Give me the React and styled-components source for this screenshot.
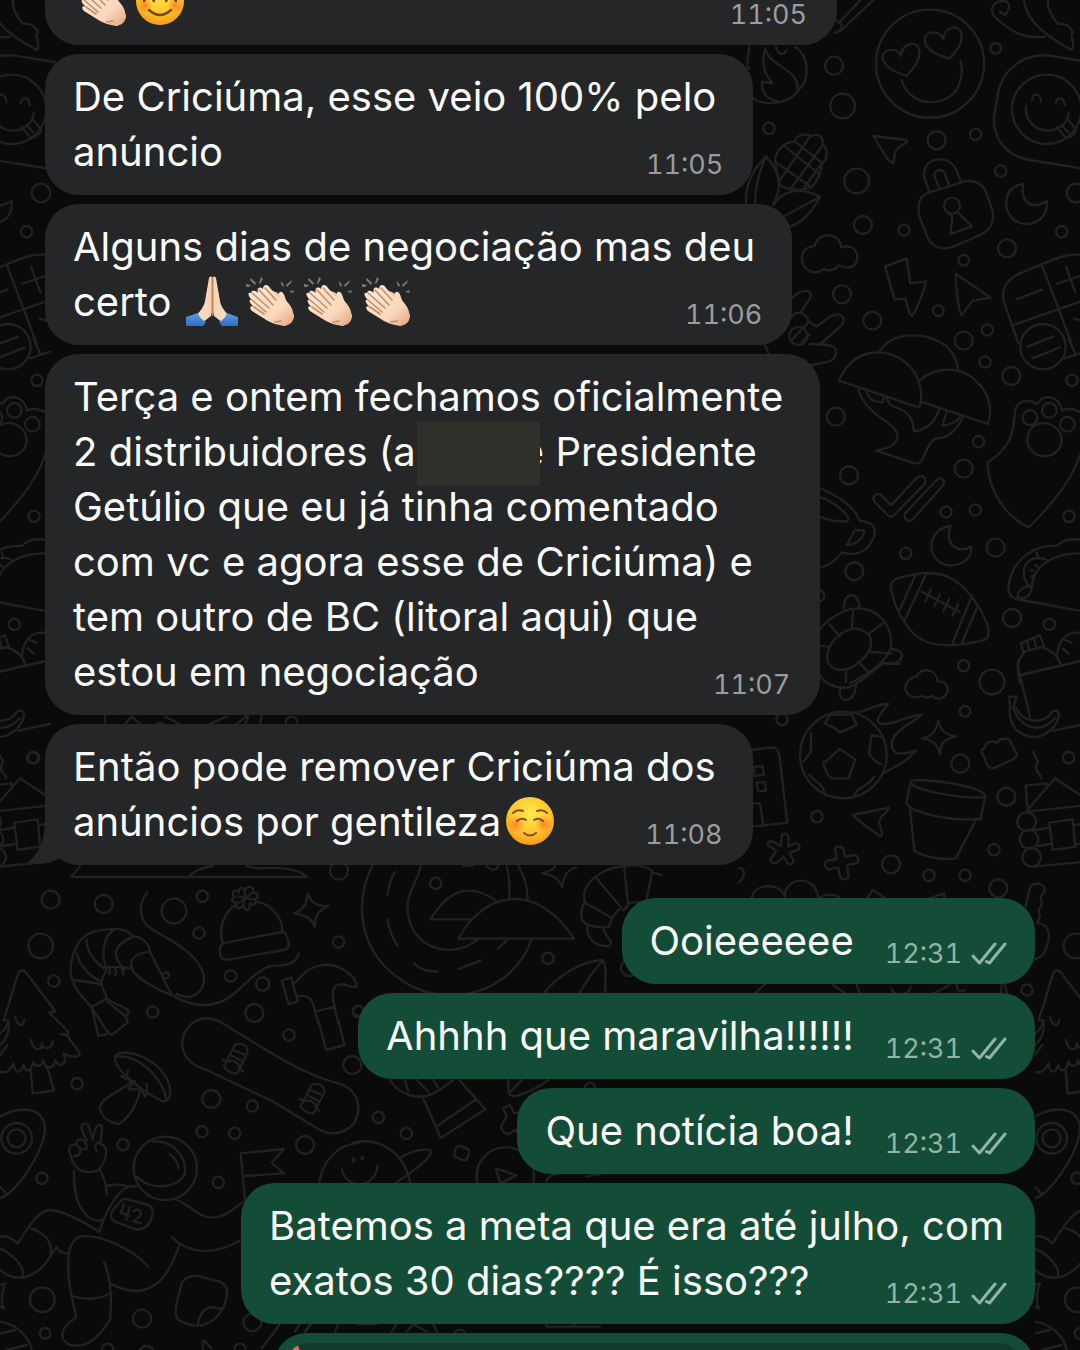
import React from "react";
import styled, { createGlobalStyle } from "styled-components";

const App = () => {
    return (
        <>
            <GlobalStyle />
            <Screen>
                <Wallpaper />
                <Thread>
                    {messages.map((message) => (
                        <Message key={message.id} {...message} />
                    ))}
                </Thread>
            </Screen>
        </>
    );
};

export default App;

const Message = ({ own, wide, single, tail, groupStart, quote, lines, time }) => (
    <Bubble $own={own} $wide={wide} $groupStart={groupStart}>
        {tail && <Tail />}
        {quote ? (
            <Quote>
                <QuoteMark viewBox="0 0 16 40" aria-hidden="true">
                    <path d="M0 9 L6 0 L9 8 L12 30 L0 40 Z" fill="#e8696b" />
                </QuoteMark>
            </Quote>
        ) : (
            <Body $single={single} $own={own}>
                <Text>
                    {lines.map((line, index) => (
                        <Line key={index}>{line}</Line>
                    ))}
                </Text>
                <Meta $own={own}>
                    <time>{time}</time>
                    {own && <Ticks />}
                </Meta>
            </Body>
        )}
    </Bubble>
);

const Ticks = () => (
    <TicksIcon viewBox="0 0 36 24" role="img" aria-label="Entregue">
        <path d="M2 14 L8.5 21 L24 2 M15.500 19.500 L18.500 21 L34 2" />
    </TicksIcon>
);

const Tail = () => (
    <TailShape viewBox="0 0 40 50" aria-hidden="true">
        <path d="M17 0 C17 22 14 36 0 47 C10 51 24 48 32 43 L40 46 L40 0 Z" />
    </TailShape>
);

// Emoji

const Clap = () => (
    <Emoji viewBox="0 0 58 50" role="img" aria-label="palmas">
        <defs>
            <linearGradient id="clapSkin" x1="0" y1="0" x2="1" y2="1">
                <stop offset="0" stopColor="#fdeada" />
                <stop offset="0.65" stopColor="#fad8bb" />
                <stop offset="1" stopColor="#e3a27c" />
            </linearGradient>
        </defs>
        <g fill="#77787a">
            <path d="M10 2 L15 7 L14 9 L9 4 Z M5 8 L10 9 L8 11 L5 11 Z M20 1 L22 3 L19 8 L18 7 Z" />
            <path d="M40 5 L43 9 L42 11 L40 8 Z M51 4 L50 7 L46 11 L45 9 Z M52 14 L53 17 L48 16 Z" />
        </g>
        <path
            d="M38 18 C40 15 42 16 43 20 C44 26 51 29 52 36 L53 41 L44 50 L34 45 L18 24 C22 12 35 14 38 18 Z"
            fill="#f0c4a0"
        />
        <path
            d="M10 17 C11 13 15 15 17 17 C15 12 19 10 22 13 C22 8 27 8 29 12 L39 23 C36 17 39 14 42 17 C44 19 44 24 47 27 C50 30 51 33 51 37 L53 39 C53 46 49 49 43 50 C36 49 31 47 27 45 L11 35 C8 32 9 29 13 31 C7 26 8 23 11 24 C6 19 7 16 10 17 Z"
            fill="url(#clapSkin)"
        />
        <path
            d="M11 17 L28 32 M11 24 L25 36 M13 31 L23 38 M18 14 L32 29 M24 12 L35 24 M34 46 L40 45"
            fill="none"
            stroke="#c58d68"
            strokeWidth="1.6"
            strokeLinecap="round"
        />
    </Emoji>
);

const Pray = () => (
    <Emoji viewBox="0 0 58 50" role="img" aria-label="mãos juntas">
        <defs>
            <linearGradient id="praySkin" x1="0" y1="0" x2="1" y2="0">
                <stop offset="0" stopColor="#fbe0c8" />
                <stop offset="0.45" stopColor="#f7d3b4" />
                <stop offset="0.5" stopColor="#b98668" />
                <stop offset="0.55" stopColor="#f7d3b4" />
                <stop offset="1" stopColor="#fbe0c8" />
            </linearGradient>
            <linearGradient id="praySleeve" x1="0" y1="0" x2="0" y2="1">
                <stop offset="0" stopColor="#5a9ee6" />
                <stop offset="1" stopColor="#2f6fc0" />
            </linearGradient>
        </defs>
        <path
            d="M26 2 C27 0 29 0 29.5 2 C30 0 32 0 33 2 L37 25 C38 31 42 35 46 40 L40 47 L31 40 L29.5 34 L28 40 L19 47 L13 40 C17 35 21 31 22 25 Z"
            fill="url(#praySkin)"
        />
        <path d="M29.5 4 L29.5 40" stroke="#b98668" strokeWidth="1.3" />
        <path
            d="M3 41 L15 37 C16 41 19 44 23 46 L20 50 L3 50 Z M55 41 L44 37 C43 41 40 44 36 46 L39 50 L55 50 Z"
            fill="url(#praySleeve)"
        />
    </Emoji>
);

const FaceGradients = () => (
    <defs>
        <radialGradient id="face" cx="0.5" cy="0.35" r="0.65">
            <stop offset="0" stopColor="#ffe94f" />
            <stop offset="0.6" stopColor="#fdc82d" />
            <stop offset="1" stopColor="#f39a1b" />
        </radialGradient>
        <radialGradient id="cheek">
            <stop offset="0" stopColor="#fb6a2a" stopOpacity="0.75" />
            <stop offset="1" stopColor="#fb7a2a" stopOpacity="0" />
        </radialGradient>
    </defs>
);

const Smile = () => (
    <Emoji viewBox="0 0 58 50" role="img" aria-label="rosto sorridente">
        <FaceGradients />
        <circle cx="29" cy="25" r="24" fill="url(#face)" />
        <circle cx="14" cy="29" r="8" fill="url(#cheek)" />
        <circle cx="44" cy="29" r="8" fill="url(#cheek)" />
        <path
            d="M13 25 Q18 17 23 25 M35 25 Q40 17 45 25 M18 34 Q29 44 40 34"
            fill="none"
            stroke="#7a4312"
            strokeWidth="2.4"
            strokeLinecap="round"
        />
    </Emoji>
);

const Relieved = () => (
    <Emoji viewBox="0 0 58 50" role="img" aria-label="rosto contente">
        <FaceGradients />
        <circle cx="29" cy="25" r="24" fill="url(#face)" />
        <circle cx="15" cy="28" r="9" fill="url(#cheek)" />
        <circle cx="43" cy="28" r="9" fill="url(#cheek)" />
        <path
            d="M12 17 Q16 13 22 15 M36 15 Q42 13 46 17 M16 25 Q20 21 25 24 M33 24 Q38 21 42 25 M23 37 Q29 42 35 37"
            fill="none"
            stroke="#8a4c12"
            strokeWidth="2"
            strokeLinecap="round"
        />
    </Emoji>
);

// Wallpaper doodles. Each sheet is drawn at three times its size.

const sheets = [
    {
        x: 740,
        y: 0,
        dots: [
            [282, 197, 27], [308, 318, 37], [87, 385, 17], [767, 145, 16], [707, 403, 17], [590, 421, 27],
            [350, 543, 37], [369, 675, 27], [492, 690, 17], [782, 513, 17], [1008, 579, 28], [965, 695, 17],
            [801, 745, 27], [671, 781, 16], [306, 883, 27], [397, 962, 27], [595, 932, 16], [742, 990, 17],
            [671, 1022, 27], [570, 191, 162], [920, 328, 104], [909, 1040, 68], [636, 617, 24],
        ],
        paths: [
            "M500 228 C460 215 425 195 428 168 C432 145 475 142 482 168 C488 128 530 120 538 150 C542 180 520 205 500 228 Z",
            "M628 176 C590 165 553 148 554 118 C558 90 600 90 610 118 C612 80 655 70 664 100 C670 130 648 155 628 176 Z",
            "M485 240 C510 330 640 325 660 245 C667 225 666 200 661 183",
            "M400 408 L500 420 C510 427 468 442 466 455 L460 490 L445 480 Z",
            "M568 578 L552 530 C545 465 640 460 652 520 L664 547 M598 566 L583 527 C580 505 612 505 616 525 L628 557",
            "M568 577 L665 547 C700 535 730 550 740 580 L757 630 C765 665 750 692 720 705 L640 740 C600 752 570 738 560 705 L540 655 C528 615 540 585 568 577 Z",
            "M625 640 L637 648 L632 702 L696 679 L656 640",
            "M850 552 C775 560 785 670 858 672 C900 672 925 640 920 603 C870 635 840 600 850 552 Z",
            "M224 738 C235 690 305 700 303 743 C340 725 370 770 340 798 C325 807 310 803 296 795 C285 812 265 815 252 807 C220 832 180 805 187 765 C190 748 208 738 224 738 Z",
            "M435 800 L500 775 L511 850 L558 844 C555 865 525 945 515 947 C505 945 502 915 496 896 L464 899 Z",
            "M648 822 L752 893 L698 902 L665 945 C655 940 645 830 648 822 Z",
            "M1060 188 L930 167 C860 158 790 200 774 280 L763 345 C755 420 805 470 870 480 L1060 511",
            "M858 318 C850 405 975 420 987 337 M876 300 C880 277 900 277 904 305 M947 310 C953 288 972 290 974 316",
            "M951 382 L975 411 C985 420 1015 400 1005 385 L982 356 M965 375 L985 397",
            "M1035 765 C990 758 960 770 900 795 L840 820 C800 838 785 865 790 900 L835 1030 M905 793 L995 1030 M820 975 L1035 900 M830 898 L906 869 M978 800 L1006 876 M952 851 L1030 825 M885 1030 L940 1010 M1003 955 L1040 968",
            "M775 60 C735 30 765 -5 800 5 M775 60 C820 100 860 118 915 110 M850 -10 C855 40 880 90 995 150 C1010 140 985 100 1000 98 C990 75 970 70 955 72 C935 50 918 20 925 -10 M800 5 C815 20 805 30 795 45 L780 35",
            "M28 140 C25 170 15 210 30 205 M35 290 C60 320 150 315 175 270 C210 240 210 170 165 140 M75 145 C60 210 85 235 97 250 L65 245 C65 275 80 300 110 302 M75 145 C85 200 180 205 172 270 M108 140 C115 165 130 170 140 150",
            "M105 485 C105 450 135 425 165 425 C170 400 205 400 210 410 C240 395 250 415 248 435 C265 445 265 480 245 490 C245 520 230 545 215 562 C190 570 150 575 120 555 Z M105 485 L215 562 M135 440 L235 520 M165 425 L248 490 M120 540 L210 410 M150 570 L248 435 M188 570 L245 490",
            "M18 615 C15 560 35 510 78 470 C125 520 125 570 100 610 M45 610 C45 560 55 520 78 470 M100 615 C130 570 180 560 240 590 C215 640 180 670 150 680 M240 590 L130 650",
            "M295 70 L370 -10 M300 95 L400 0 M285 62 C310 65 312 90 285 98",
            "M155 895 C185 865 220 865 210 895 L180 940 M150 955 C170 925 200 940 205 963 L230 980 L270 950 C310 930 320 960 305 975 L250 1025 M155 1020 L208 965 M185 1025 L210 1003",
        ],
    },
    {
        x: 740,
        y: 340,
        dots: [
            [735, 66, 17], [814, 108, 27], [996, 121, 17], [287, 230, 27], [716, 305, 17], [671, 386, 27],
            [327, 406, 27], [618, 516, 17], [706, 510, 17], [987, 529, 17], [497, 640, 17], [767, 623, 27],
            [343, 694, 27], [236, 767, 17], [816, 834, 27], [928, 853, 17], [671, 977, 17], [870, 233, 22],
            [928, 211, 22], [982, 253, 22], [175, -12, 27],
        ],
        paths: [
            "M297 122 C340 20 440 20 500 70 C545 110 550 170 538 203 Z",
            "M540 120 C590 75 670 80 710 125 C755 165 755 220 744 252 L543 185",
            "M418 36 C450 -25 560 -30 620 20 C645 45 655 70 653 92",
            "M355 148 C375 230 480 250 472 290 C468 320 440 325 408 332 L525 370 C560 375 550 310 590 295 C630 295 655 260 668 232 M440 175 C450 220 515 185 522 274 C560 270 585 245 598 207 M380 155 C390 185 405 185 428 187 L432 170 M620 215 L607 256 C635 255 650 245 660 232",
            "M400 475 C405 460 418 460 425 467 L453 496 L532 412 C545 402 562 415 555 430 L463 525 C455 532 448 530 443 525 L403 485 Z M495 520 L590 420 C602 408 617 420 610 435 L518 538 C505 548 490 538 495 520 Z",
            "M825 215 C830 180 865 175 892 192 C910 160 955 165 967 212 C985 200 1005 205 1035 225 M825 215 C820 280 815 320 742 368 C745 450 795 530 866 562 C920 510 1000 420 1025 330 M862 300 C862 230 960 235 965 300 C962 365 865 365 862 300 Z",
            "M632 558 C555 565 555 672 632 676 C675 675 700 645 692 620 C655 645 610 610 632 558 Z",
            "M452 740 C452 715 480 712 525 703 C620 685 670 730 713 795 C740 840 765 895 725 902 C650 920 570 925 525 885 C480 840 460 790 452 740 Z M525 708 L480 808 M558 703 L492 845 M693 775 L637 910 M713 798 L665 910 M545 755 L657 815 M573 748 L556 784 M600 763 L583 799 M628 778 L610 814 M655 792 L637 828",
            "M238 444 C300 470 345 500 358 542 C395 545 410 560 402 590 C385 635 350 650 305 637 C285 665 260 680 238 682 M238 470 C280 485 340 530 322 543 C300 548 260 540 238 530 M345 570 L373 572 C370 595 350 615 320 615 Z",
            "M238 870 C260 840 310 805 350 805 C430 805 465 880 450 930 C430 980 350 1020 330 1030 M262 945 C270 890 330 855 365 870 C405 885 400 930 365 960 C315 1010 255 990 262 945 Z M312 805 C310 750 360 755 358 805 M452 928 C500 925 500 975 435 970 M340 808 L335 862 M428 850 L385 883 M455 940 L392 936 M388 1000 L355 965 M268 852 L300 890 M238 917 L264 920 M318 1025 L318 988",
            "M1060 605 C990 590 970 600 950 618 C900 615 820 640 805 740 C805 770 820 778 845 780 L1060 820 M1060 645 C960 625 880 670 876 740 C870 775 850 780 832 770 C835 750 850 740 870 738 M890 638 L895 655 M865 735 C830 690 865 635 920 660 M872 690 L880 692 M885 675 L892 680 M875 710 L880 706",
            "M843 910 L900 885 L912 920 L850 935 Z M862 905 L868 930 M882 895 L890 925 M855 935 C830 960 830 985 840 1030 M905 922 C935 930 955 950 960 970 M840 1005 L1035 960 M950 950 C955 900 980 870 1030 880 M968 925 L985 940 M975 900 L995 908",
            "M862 20 L915 0 M877 55 L960 22 M985 -5 L1005 40 M975 55 L1035 35",
            "M75 15 L90 50 M208 12 L265 15 C300 20 295 60 255 68 L215 75 M240 12 L262 -5",
        ],
    },
    {
        x: 740,
        y: 660,
        dots: [
            [756, 66, 37], [675, 154, 16], [986, 293, 17], [661, 311, 27], [799, 410, 27], [231, 470, 17],
            [126, 178, 17], [762, 569, 17], [453, 613, 27], [567, 646, 17], [675, 646, 17], [775, 685, 27],
            [861, 990, 17], [1008, 858, 37], [310, 285, 130], [860, 485, 28], [867, 538, 28], [875, 592, 28],
        ],
        paths: [
            "M530 50 C540 20 590 25 593 65 C625 60 635 100 605 115 C590 118 580 112 575 108 C565 115 555 113 545 108 C515 120 490 100 498 75 C502 60 515 53 530 50 Z",
            "M345 158 C380 155 410 130 445 132 C425 155 405 180 418 190 C450 200 490 170 547 163 C500 200 445 220 457 265 C465 290 500 280 530 271 C505 300 470 320 432 338",
            "M258 305 L299 266 L346 299 L325 355 L275 355 C265 350 250 320 250 305 Z M254 190 L270 165 L335 163 L350 195 L300 217 L285 205 Z M395 225 L425 232 M395 225 L387 280 C400 300 410 310 425 313 M213 218 L213 275 L190 305 M208 345 C230 370 250 370 255 405 M345 405 C345 385 385 380 403 350",
            "M594 182 C602 210 615 225 648 229 C620 235 600 245 600 283 C592 250 575 238 545 235 C575 230 590 215 594 182 Z",
            "M725 275 C725 262 735 268 735 262 C735 245 765 240 770 250 L780 238 L805 235 L830 280 C832 290 825 295 815 300 L760 325 C750 325 745 320 742 315 Z",
            "M880 275 C890 310 900 290 888 320 C885 340 900 335 904 355",
            "M512 365 C515 350 730 375 736 408 C725 425 510 395 512 365 Z M512 365 L499 430 C510 455 620 485 722 477 L736 408 M510 445 L523 572 C560 595 620 600 648 595 L706 482",
            "M337 465 L447 443 C440 465 420 460 418 490 C425 510 430 530 420 528 C400 515 355 480 337 465 Z",
            "M125 535 C122 515 148 515 146 540 L145 560 L165 550 C185 550 182 570 165 573 L148 578 L160 600 C160 618 145 615 140 605 L130 590 L115 605 C100 615 85 605 95 592 L110 572 L90 560 C75 550 88 540 100 545 L123 558 Z",
            "M285 565 C290 555 310 560 311 570 L315 590 L345 585 C358 590 358 605 348 610 L322 615 L325 650 C320 662 305 660 300 650 L295 622 L265 628 C252 620 252 605 262 602 L290 597 Z",
            "M38 270 L95 262 C110 262 115 270 118 285 L142 488 L38 500 M42 320 L68 318 L72 344 L44 348 Z M50 368 L74 366 L78 392 L54 394 Z M40 430 L60 430 L70 495",
            "M808 110 L830 110 L822 132 C850 200 920 190 935 155 C950 148 960 155 956 170 C945 215 900 235 870 230 C820 220 805 180 810 140 Z M818 140 C840 205 900 225 945 175",
            "M835 0 C830 20 835 30 840 45 L870 172 M842 45 L1035 0 M940 212 L1035 192 M955 0 L960 10",
            "M857 377 L920 370 L920 380 M857 377 L862 440 M862 450 L945 355 L1035 415 M862 455 L1035 436 M888 510 L925 503 M893 558 L930 552 M1003 495 L1035 490 M1010 553 L1035 550 M880 620 L1035 605 M928 488 L998 478 L1006 560 L938 570 Z M870 508 L888 508",
            "M857 740 L868 690 C870 665 915 665 914 690 C912 705 895 705 905 725 C912 740 885 745 900 765 L892 790 C925 790 930 820 925 845 C915 885 900 895 885 897",
            "M35 715 C40 670 120 665 135 710 C130 655 225 635 235 715 M235 715 C255 700 285 700 305 718 M380 718 L398 690 L438 716 M565 716 L612 700 L615 716 M-5 625 C15 620 20 650 -5 668",
            "M40 1003 L75 973 M280 975 L320 1003 M350 975 L360 1003 M575 1003 L630 975 M650 975 C650 995 665 995 675 990 M455 985 C460 1010 505 1010 512 980 M785 975 L783 1003 M795 975 L802 1003",
            "M238 45 C260 75 290 85 320 83 C350 75 380 50 430 10 L480 12 M300 88 C290 130 345 135 348 75",
        ],
    },
    {
        x: 0,
        y: 700,
        dots: [
            [98, 173, 17], [152, 599, 27], [311, 612, 27], [522, 633, 37], [607, 589, 17], [597, 699, 17], [122, 738, 37],
            [161, 843, 17], [1017, 512, 27], [1016, 726, 17], [692, 828, 17], [763, 939, 27], [458, 936, 17],
            [867, 1005, 17], [875, 67, 17], [1075, 935, 17], [498, 826, 9], [788, 852, 20],
        ],
        paths: [
            "M240 498 L214 531 L922 531 C900 510 850 500 772 505 L740 498 M565 531 C590 505 620 500 640 498",
            "M442 577 C410 615 420 670 460 690 C520 725 600 765 612 830 C615 880 570 905 530 882",
            "M515 885 C490 880 420 840 400 815 C380 780 405 760 450 755 L515 885 M450 755 C445 720 415 708 400 710 C380 685 350 685 325 688 C270 690 230 710 215 780 C200 840 235 880 275 922 L320 895 C315 870 300 860 305 845 C310 815 330 805 315 800 M400 710 C355 730 335 750 355 785 L375 810 M345 688 C305 710 305 770 318 800 M260 720 C260 760 290 790 312 805 M230 760 C240 800 270 830 305 845 M222 840 L300 852 M315 800 C345 800 365 800 392 805 M330 805 L328 822 M345 805 C350 820 350 820 345 825 M365 805 L370 822",
            "M275 922 L295 1008 L320 1003 M275 922 L322 995 L335 1005 L383 968 L378 950 C390 940 385 925 375 925 L322 898 M322 905 L378 950",
            "M515 885 C590 930 660 925 720 865 C780 810 800 795 830 797 C870 798 890 785 896 760",
            "M668 728 C650 670 690 620 710 615 M772 605 C820 615 850 660 846 695 M660 745 C660 735 668 730 678 728 L840 697 C850 695 858 698 860 708 L866 730 C868 742 862 747 852 750 L690 778 C670 782 660 775 660 760 Z",
            "M735 575 C735 555 765 555 760 578 C780 580 775 600 762 597 C775 610 760 620 750 610 C750 632 735 640 730 615 C715 635 700 620 712 607 C695 610 690 595 705 592 C690 580 705 565 717 577 C715 560 730 560 735 575 Z M735 578 L733 610 M715 590 L755 598 M718 608 L755 580",
            "M924 580 C932 605 945 620 985 618 C960 630 945 640 945 680 C930 650 915 645 882 640 C910 630 920 615 924 580 Z",
            "M845 842 L873 833 L894 905 L866 912 Z M880 850 C900 845 905 800 980 794 C1020 794 1070 830 1070 860 C1050 865 1010 835 1000 870 C998 890 1000 910 1005 920 L945 935 C940 905 930 880 892 890 M945 935 L955 970 M1003 920 L1015 970",
            "M0 1000 C15 990 22 975 25 962 L10 960 C30 910 40 860 55 820 C60 808 72 808 78 818 L163 930 C170 940 150 935 148 938 L200 990 C210 1000 205 1010 182 1002 M45 952 C50 975 70 985 73 960",
            "M315 48 L315 74 M375 72 L395 50 L420 72 M470 72 C480 65 485 65 490 72 M495 50 L540 72 M628 72 L680 50 M710 72 L740 48 M780 72 L785 48 M735 72 L745 50",
        ],
    },
    {
        x: 0,
        y: 1020,
        dots: [
            [231, 191, 17], [634, 237, 27], [757, 258, 17], [606, 335, 17], [704, 340, 17], [369, 374, 17],
            [915, 375, 27], [126, 475, 17], [655, 487, 17], [1057, 135, 27], [127, 839, 37], [135, 940, 16],
            [426, 896, 27], [757, 907, 27], [323, 988, 17], [720, 988, 17], [440, 1000, 22], [50, 355, 46], [50, 355, 27],
            [496, 445, 95],
        ],
        paths: [
            "M0 75 C20 60 30 30 25 5 M182 42 L200 45 L240 100 C235 120 200 105 190 100 C205 130 180 150 165 120 C160 150 135 150 130 120 C125 140 110 145 100 125 C95 155 75 160 70 135 C60 165 45 160 40 130 C30 155 15 160 0 155 M22 75 L0 105 M93 60 C100 100 130 90 125 70 C130 90 155 90 158 65 M92 150 L98 221 L162 211 L143 145",
            "M345 110 C370 75 500 120 511 210 C510 250 490 245 480 240 C430 215 340 150 345 110 M345 110 C420 100 490 180 500 240 M385 150 C385 170 370 170 362 168 C375 180 395 180 405 185 L385 205 C400 215 410 200 420 212 C425 200 430 225 435 230 C445 220 440 200 440 190 M395 185 C345 225 300 235 300 265 C305 300 345 315 360 310 C390 290 410 250 420 215",
            "M660 5 C600 -25 540 20 547 80 C555 125 590 140 620 150 L820 245 L960 330 C1010 355 1070 330 1075 270 C1075 215 1040 195 1005 187 C900 160 800 90 660 5 Z",
            "M705 75 C730 65 745 80 742 100 L712 160 C700 165 675 150 672 138 Z M700 90 L738 105 M690 105 L730 125 M685 122 C705 118 720 135 718 145 M668 120 L690 125 M715 140 L730 155",
            "M935 195 C960 185 975 200 972 220 L942 278 C930 285 905 270 902 258 Z M930 210 L968 225 M920 225 L960 245 M915 242 C935 238 950 255 948 262 M898 238 L920 243 M945 260 L958 273",
            "M0 290 C60 255 135 260 135 330 C130 390 60 510 0 535 M0 500 L22 525",
            "M260 360 C230 310 250 305 265 315 L278 360 C285 300 310 310 306 330 L300 370 C330 380 320 420 295 450 C260 465 220 455 212 405 C200 380 215 372 230 375 C225 355 245 355 255 365 C265 380 260 395 245 385 M230 375 C250 390 240 410 222 408 M290 393 C280 375 290 365 300 368",
            "M222 452 C220 530 240 590 290 602 L312 600 M300 452 C315 475 320 500 320 523 M320 498 C360 490 370 495 385 500 L415 498 M385 500 C345 520 315 580 298 635 C250 605 190 570 145 570 C110 575 80 630 53 670 C35 655 20 645 0 650",
            "M410 470 C450 510 530 510 555 460 C560 400 510 360 460 365 M510 403 C525 415 535 430 535 443",
            "M365 540 C375 533 385 538 395 542 L445 555 C460 565 460 580 455 592 C445 625 425 630 405 627 L345 605 C330 595 332 580 338 570 Z",
            "M372 553 L362 578 L388 588 M390 560 L378 600 M400 575 C415 560 430 575 418 590 L400 605 L423 609",
            "M528 538 C580 560 600 600 650 592 C690 585 710 555 740 540 M722 400 L852 387 L815 428 L852 460 L735 468 M722 400 L735 540 M516 652 C570 705 650 705 722 660",
            "M93 625 C140 640 155 670 153 700 M0 685 C50 710 75 745 68 770 M0 750 C60 800 120 760 150 710 L170 680 C175 695 190 700 205 700 M445 740 C400 690 300 640 240 650 C200 665 205 720 205 760 C210 830 225 860 228 893 C180 920 175 960 210 975 C260 985 290 960 330 900 C335 850 335 780 312 725 M215 828 C250 840 300 840 328 820 M335 793 C440 845 500 790 538 675",
            "M545 790 C560 765 580 765 600 770 L660 785 C680 795 685 810 680 830 C670 890 620 925 575 915 C530 905 520 895 530 850 Z M593 915 C600 875 620 860 640 862 C660 870 668 865 672 862",
            "M0 795 L15 790 C5 820 0 845 12 865 L0 860 M0 905 C60 915 90 960 95 990 M0 940 L45 930 M20 990 L80 975 M785 985 L840 912 M900 912 L885 935 M930 912 L915 935 M610 990 C605 960 610 960 615 965 L635 985",
            "M955 0 L978 90 L1033 75 L1015 0",
            "M958 486 C970 420 1010 375 1080 368",
        ],
    },
    {
        x: 340,
        y: 850,
        dots: [[287, 100, 17], [624, 325, 17], [868, 353, 25], [55, 482, 15]],
        paths: [
            "M97 48 C40 160 60 300 170 380 C310 490 520 430 575 268 M243 48 C225 110 200 130 203 180 C210 300 340 330 412 268 M500 48 C510 80 508 110 508 145 M535 48 C555 80 562 110 563 148",
            "M165 65 C150 90 145 110 143 135 M142 208 C148 240 160 270 172 287 M222 340 C240 360 265 365 293 365 M357 357 L422 331 M473 297 L503 268",
            "M272 208 C330 110 400 100 472 155 M272 208 L392 208 M355 266 C440 110 600 105 702 266 Z M440 48 C455 65 470 60 475 48 M370 48 L400 46",
            "M605 70 C630 65 640 58 645 48 M605 70 C645 75 655 85 667 112 C670 80 680 60 708 52",
            "M850 50 C880 40 930 50 937 65 L918 155 L870 158 C860 165 860 180 848 180 C845 170 770 90 768 80 C790 60 820 52 852 48 L864 160 M768 80 C740 100 725 130 735 155 C720 180 720 210 735 220 C760 235 780 230 805 232 C815 210 820 190 838 178 M735 158 L815 203 M742 228 C738 270 770 290 808 288 C825 270 790 260 790 232 M937 68 L965 75",
            "M610 432 C650 380 720 335 785 330 C798 340 798 360 795 432 M788 333 C760 360 740 395 715 432",
        ],
    },
    {
        x: 300,
        y: 1020,
        dots: [[235, 292, 17], [319, 340, 17], [160, 420, 3], [187, 415, 3], [616, 468, 86], [870, 205, 16]],
        paths: [
            "M160 368 C175 362 190 362 210 365 C280 375 320 430 330 486 M125 445 C135 510 225 510 233 437 M303 412 C350 385 390 385 394 395 C390 415 340 455 290 486",
            "M270 180 C300 230 360 240 400 220 C430 205 445 190 460 180 M315 180 L325 215 M350 180 L385 215 M400 180 L415 205 M367 228 L422 354 L556 268 L478 180 M408 320 L525 240",
            "M625 180 C625 220 620 230 650 228 C690 215 720 200 745 180 M632 215 L665 180",
            "M470 380 C475 375 480 377 505 388 C510 392 508 400 500 418 C498 424 490 422 465 410 C460 405 463 395 470 380 Z M587 445 L650 466 L602 490 Z",
            "M610 265 L630 255 L642 280 L665 275 M610 265 L620 290 L603 320 C605 335 620 345 630 340 L645 330 L665 345 M738 486 C745 465 770 460 780 462 M860 470 L900 462",
            "M15 935 L35 912 M105 935 L115 912 M275 935 L290 912 M320 935 L340 912 L380 935 M400 912 L410 935 M170 912 L230 912 M465 935 C475 925 485 928 495 935 M735 910 L740 920 L900 920 M820 912 L822 920",
        ],
    },
];

const Wallpaper = () => (
    <Doodles viewBox="0 0 1080 1350" preserveAspectRatio="xMidYMid slice" aria-hidden="true">
        <g id="doodles">
            {sheets.map((sheet, index) => (
                <g key={index} transform={`translate(${sheet.x} ${sheet.y}) scale(0.33333)`}>
                    {sheet.paths.map((d) => (
                        <path key={d} d={d} />
                    ))}
                    {sheet.dots.map(([cx, cy, r], dot) => (
                        <circle key={dot} cx={cx} cy={cy} r={r} />
                    ))}
                </g>
            ))}
        </g>
        {/* the right edge wraps round to the left above the cabin */}
        <svg x="0" y="0" width="56" height="868" viewBox="1035 0 56 868">
            <use href="#doodles" />
        </svg>
        {/* and the left edge wraps round to the right below it */}
        <svg x="1035" y="960" width="45" height="390" viewBox="0 960 45 390">
            <use href="#doodles" />
        </svg>
    </Doodles>
);

// Styled Components
const GlobalStyle = createGlobalStyle`
    * {
        box-sizing: border-box;
    }

    body {
        margin: 0;
        background: #0a0a0a;
    }
`;

const Screen = styled.main`
    position: relative;
    height: 100vh;
    overflow: hidden;
    background: #0a0a0a;
    font-family: Inter, "Liberation Sans", sans-serif;
    font-size: 40px;
    line-height: 55px;
    color: #fafafa;
`;

const Doodles = styled.svg`
    position: absolute;
    inset: 0;
    width: 100%;
    height: 100%;
    fill: none;
    stroke: #202122;
    stroke-width: 7;
    stroke-linecap: round;
    stroke-linejoin: round;
`;

/* scrolled so that the top of the first bubble is out of view */
const Thread = styled.div`
    position: relative;
    display: flex;
    flex-direction: column;
    gap: 9px;
    margin-top: -41px;
    padding: 0 45px;
`;

const Bubble = styled.article`
    position: relative;
    flex: none;
    align-self: ${({ $own }) => ($own ? "flex-end" : "flex-start")};
    width: ${({ $wide, $own }) => ($wide ? ($own ? "77%" : "80%") : "auto")};
    margin-top: ${({ $groupStart }) => ($groupStart ? "24px" : "0")};
    border-radius: 34px;
    background: ${({ $own }) => ($own ? "#144d37" : "#242628")};
`;

const Body = styled.div`
    display: grid;
    grid-template-columns: ${({ $single }) => ($single ? "1fr auto" : "1fr")};
    column-gap: 28px;
    padding: 15px ${({ $own }) => ($own ? "28px" : "30px")} 16px 28px;

    > * {
        grid-row: 1;
        ${({ $single }) => ($single ? "" : "grid-column: 1;")}
    }

    > p {
        padding-right: ${({ $own }) => ($own ? "3px" : "7px")};
    }
`;

const Text = styled.p`
    margin: 0;
`;

const Line = styled.span`
    display: block;
    height: 55px;
    white-space: nowrap;
`;

const Meta = styled.div`
    display: flex;
    align-items: center;
    gap: 9px;
    justify-self: end;
    align-self: end;
    margin-bottom: -3px;
    font-size: 27px;
    font-variant-numeric: tabular-nums;
    line-height: 34px;
    color: ${({ $own }) => ($own ? "#92b3a5" : "#9b9c9e")};
`;

const TicksIcon = styled.svg`
    width: 36px;
    height: 24px;
    fill: none;
    stroke: currentColor;
    stroke-width: 3;
    stroke-linecap: round;
    stroke-linejoin: round;
`;

const TailShape = styled.svg`
    position: absolute;
    left: -17px;
    bottom: 0;
    width: 40px;
    height: 50px;
    fill: #242628;
`;

const Emoji = styled.svg`
    display: inline-block;
    width: 58px;
    height: 50px;
    vertical-align: -10px;
`;

const Redaction = styled.span`
    position: relative;
    z-index: 1;
    display: inline-block;
    width: 123px;
    height: 64px;
    margin: -2px -19px -8px 1px;
    vertical-align: top;
    background: #2e3029;
`;

const Quote = styled.div`
    height: 120px;
    margin: 10px 10px 0;
    overflow: hidden;
    border-radius: 26px;
    background: #123b2b;
`;

const QuoteMark = styled.svg`
    display: block;
    width: 16px;
    height: 40px;
    margin-left: 8px;
`;

// Conversation
const messages = [
    { id: 1, wide: true, single: true, time: "11:05", lines: [<><Clap /><Smile /></>] },
    { id: 2, time: "11:05", lines: ["De Criciúma, esse veio 100% pelo", "anúncio"] },
    {
        id: 3,
        time: "11:06",
        lines: ["Alguns dias de negociação mas deu", <>certo <Pray /><Clap /><Clap /><Clap /></>],
    },
    {
        id: 4,
        time: "11:07",
        lines: [
            "Terça e ontem fechamos oficialmente",
            <>2 distribuidores (a<Redaction />e Presidente</>,
            "Getúlio que eu já tinha comentado",
            "com vc e agora esse de Criciúma) e",
            "tem outro de BC (litoral aqui) que",
            "estou em negociação",
        ],
    },
    {
        id: 5,
        tail: true,
        time: "11:08",
        lines: ["Então pode remover Criciúma dos", <>anúncios por gentileza<Relieved /></>],
    },
    { id: 6, own: true, groupStart: true, single: true, time: "12:31", lines: ["Ooieeeeee"] },
    { id: 7, own: true, single: true, time: "12:31", lines: ["Ahhhh que maravilha!!!!!!"] },
    { id: 8, own: true, single: true, time: "12:31", lines: ["Que notícia boa!"] },
    {
        id: 9,
        own: true,
        time: "12:31",
        lines: ["Batemos a meta que era até julho, com", "exatos 30 dias???? É isso???"],
    },
    { id: 10, own: true, wide: true, quote: true },
];
